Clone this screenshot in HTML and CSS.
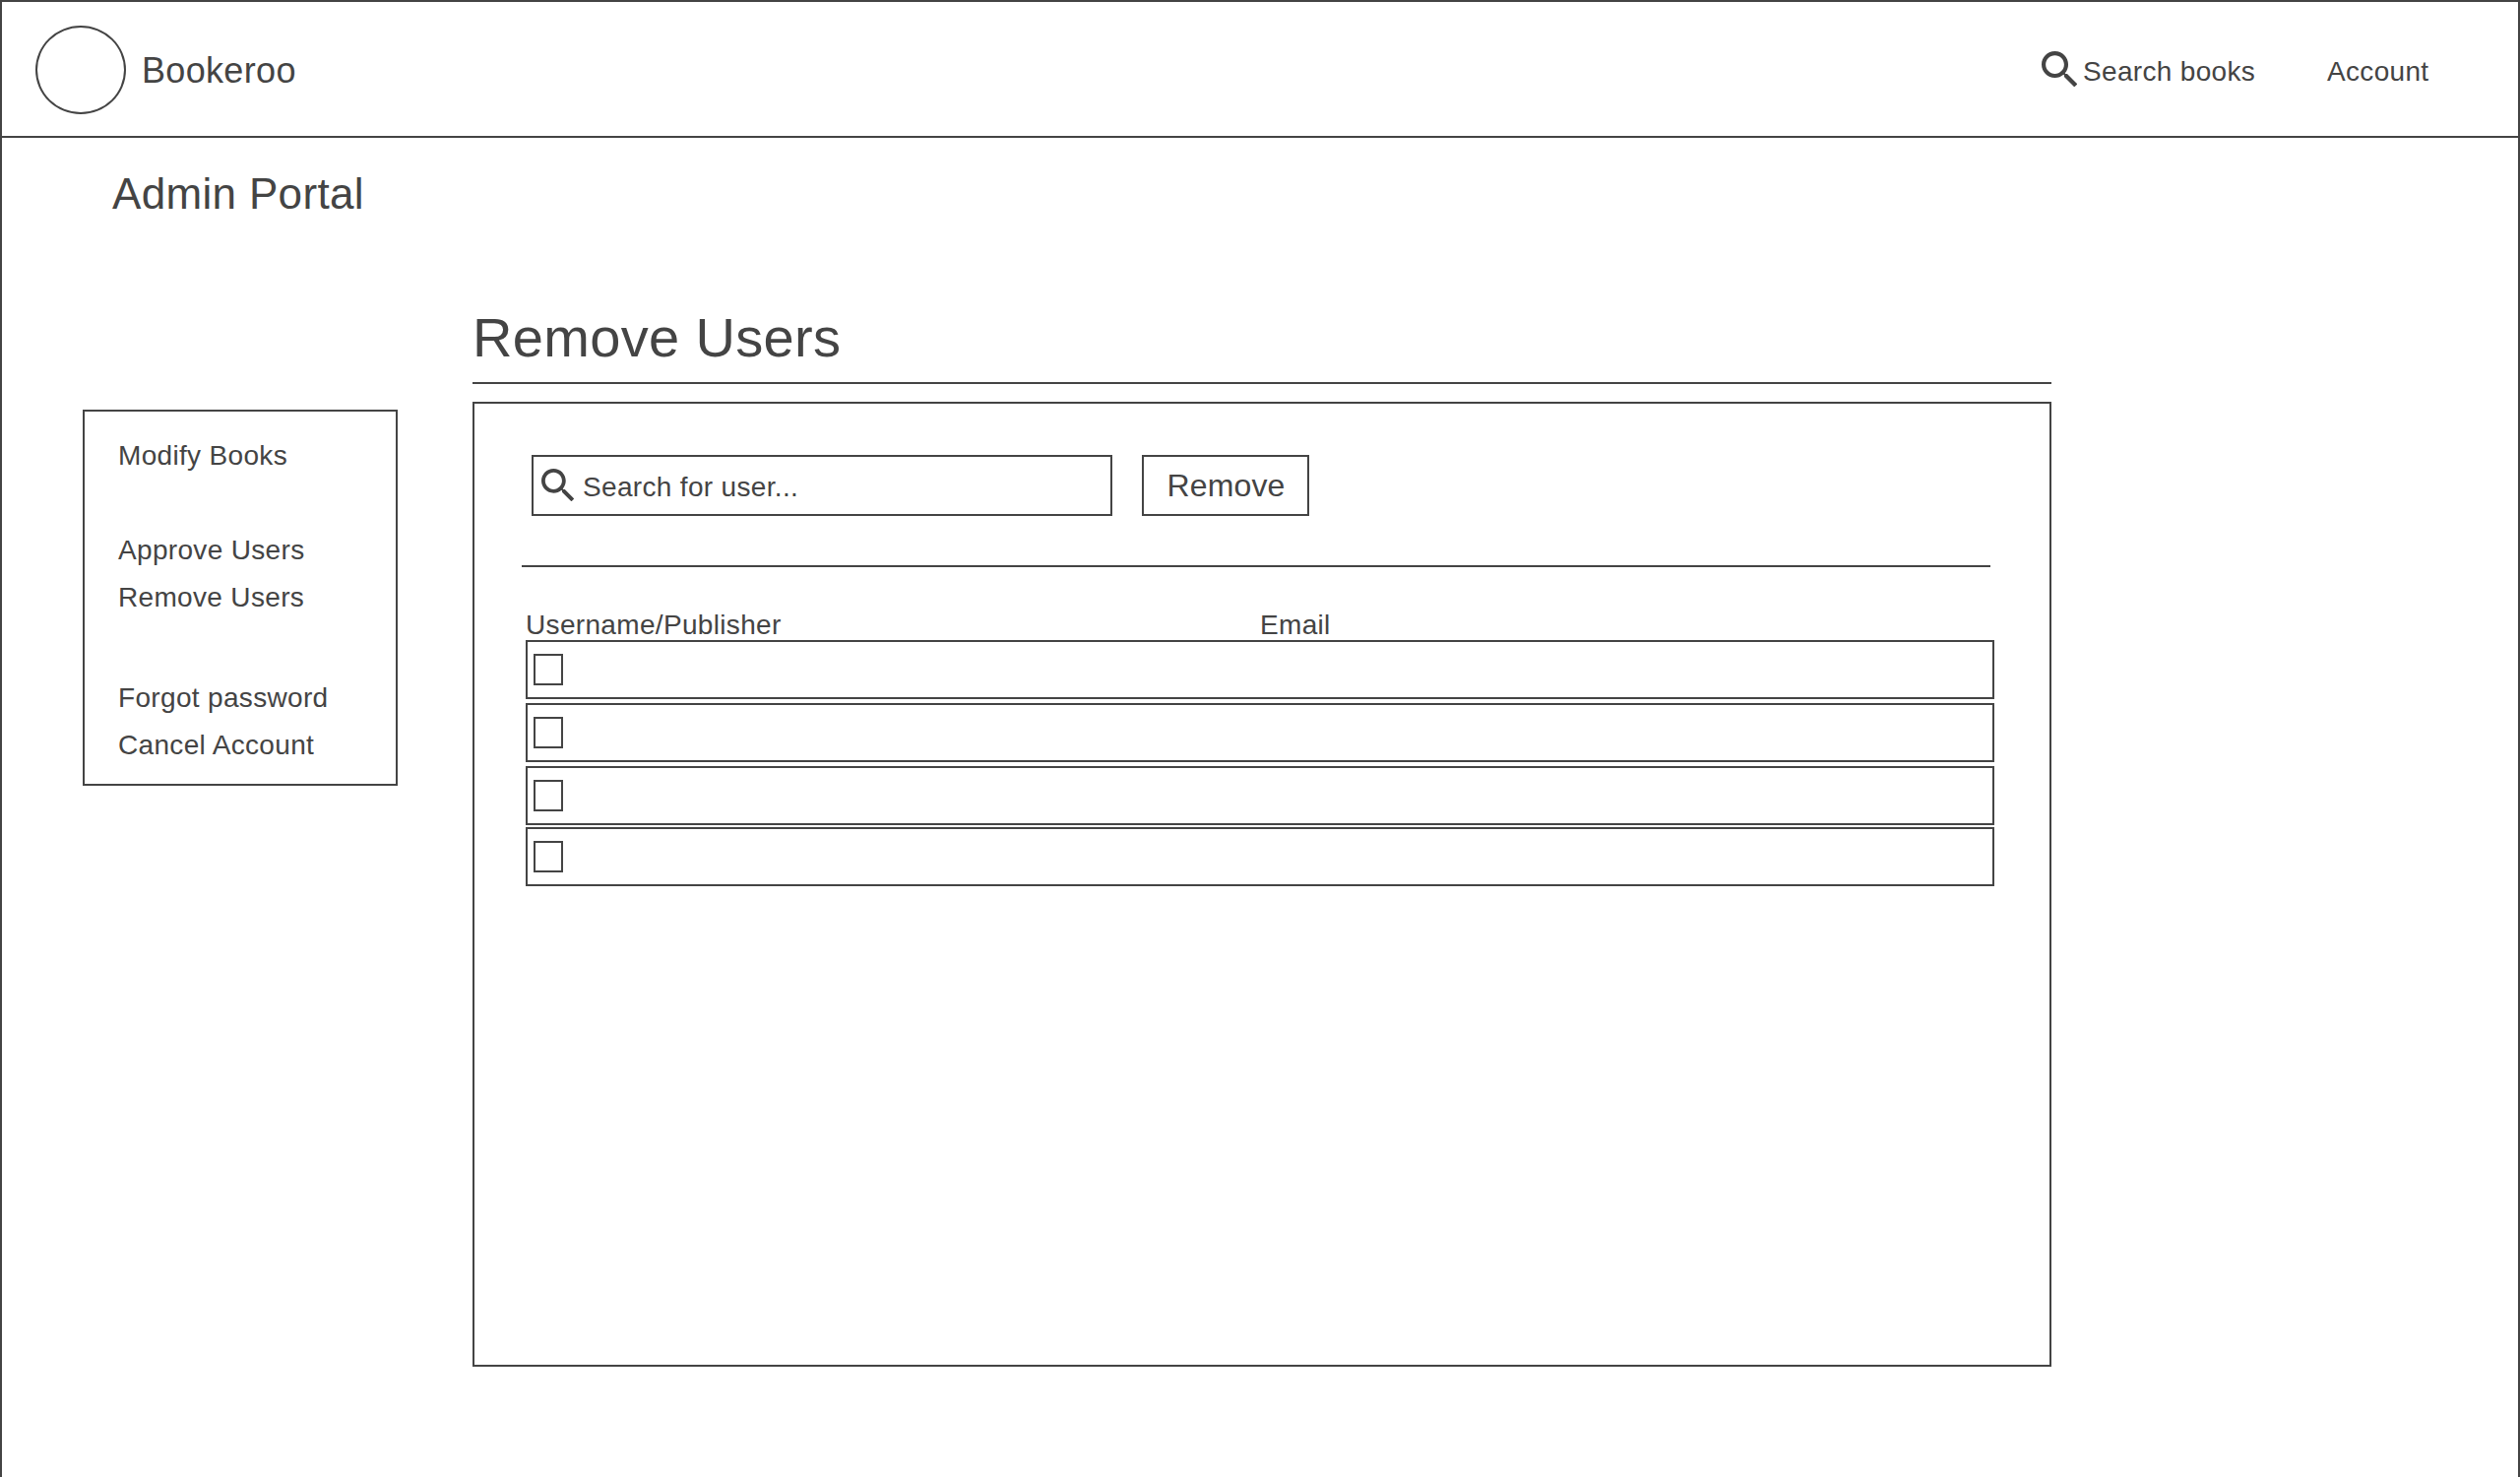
FILE: index.html
```html
<!DOCTYPE html>
<html lang="en">
<head>
  <meta charset="utf-8">
  <title>Bookeroo – Admin Portal</title>
  <link rel="stylesheet" href="styles.css">
</head>
<body>
  <svg class="sprite" aria-hidden="true">
    <symbol id="search" viewBox="3 3 17.49 17.49">
      <path d="M15.5 14h-.79l-.28-.27C15.41 12.59 16 11.11 16 9.5 16 5.91 13.09 3 9.5 3S3 5.91 3 9.5 5.91 16 9.5 16c1.61 0 3.09-.59 4.23-1.57l.27.28v.79l5 4.99L20.49 19l-4.99-5zm-6 0C7.01 14 5 11.99 5 9.5S7.01 5 9.5 5 14 7.01 14 9.5 11.99 14 9.5 14z"/>
    </symbol>
  </svg>
  <div class="page">
    <header class="topbar">
      <div class="logo"></div>
      <div class="brand">Bookeroo</div>
      <nav class="topnav">
        <a class="topnav-search"><svg class="icon icon-lg"><use href="#search"/></svg><span>Search books</span></a>
        <a class="topnav-account"><span>Account</span></a>
      </nav>
    </header>

    <h1 class="portal-title">Admin Portal</h1>

    <div class="content">
      <aside class="sidebar">
        <ul class="menu">
          <li>Modify Books</li>
        </ul>
        <ul class="menu">
          <li>Approve Users</li>
          <li>Remove Users</li>
        </ul>
        <ul class="menu menu-account">
          <li>Forgot password</li>
          <li>Cancel Account</li>
        </ul>
      </aside>

      <main class="main">
        <h2 class="title">Remove Users</h2>
        <section class="panel">
          <div class="toolbar">
            <div class="search-field"><svg class="icon"><use href="#search"/></svg><span>Search for user...</span></div>
            <button class="remove-button" type="button">Remove</button>
          </div>
          <div class="divider"></div>
          <div class="table">
            <div class="table-head"><span>Username/Publisher</span><span>Email</span></div>
            <div class="row"><span class="checkbox"></span></div>
            <div class="row"><span class="checkbox"></span></div>
            <div class="row"><span class="checkbox"></span></div>
            <div class="row row-last"><span class="checkbox"></span></div>
          </div>
        </section>
      </main>
    </div>
  </div>
</body>
</html>
```

FILE: styles.css
```css
* {
  box-sizing: border-box;
}

body {
  margin: 0;
  background: #fff;
  color: #444;
  font: 28px/32px "Liberation Sans", Arial, sans-serif;
  letter-spacing: 0.33px;
}

.sprite {
  display: none;
}

.page {
  height: 1500px;
  overflow: hidden;
  border: 2px solid #444;
  border-bottom: 0;
}

.topbar {
  display: flex;
  align-items: center;
  height: 138px;
  padding: 0 90px 0 34px;
  border-bottom: 2px solid #444;
}

.logo {
  width: 92px;
  height: 90px;
  margin-top: 2px;
  border: 2px solid #444;
  border-radius: 50%;
}

.brand {
  margin-left: 16px;
  padding-top: 4px;
  font-size: 36px;
  line-height: 40px;
}

.topnav {
  display: flex;
  align-items: center;
  margin-left: auto;
  padding-top: 4px;
}

.topnav-search {
  display: flex;
  align-items: center;
  width: 290px;
}

.topnav-account {
  width: 104px;
}

.topnav span {
  display: block;
  padding-top: 2px;
}

.icon {
  width: 33.3px;
  height: 33.3px;
  margin-top: -1px;
  fill: #444;
}

.icon-lg {
  width: 36.4px;
  height: 36.4px;
  margin: -4px 5.6px 0 0;
}

.portal-title {
  margin: 32px 0 0 112px;
  font-size: 44px;
  font-weight: 400;
  line-height: 50px;
}

.content {
  display: flex;
  align-items: flex-start;
  gap: 76px;
  margin-top: 89px;
  padding-left: 82px;
}

.sidebar {
  width: 320px;
  height: 382px;
  margin-top: 105px;
  padding: 21px 34px;
  border: 2px solid #444;
}

.menu {
  margin: 0 0 48px;
  padding: 0;
  list-style: none;
  line-height: 48px;
}

.menu-account {
  margin-top: 54px;
}

.main {
  width: 1604px;
}

.title {
  margin: 0;
  height: 79px;
  border-bottom: 2px solid #444;
  font-size: 56px;
  font-weight: 400;
  line-height: 64px;
}

.panel {
  height: 980px;
  margin-top: 18px;
  padding: 52px 56px 0 48px;
  border: 2px solid #444;
}

.toolbar {
  display: flex;
  gap: 30px;
  margin-left: 10px;
}

.search-field {
  display: flex;
  align-items: center;
  gap: 9px;
  width: 590px;
  height: 62px;
  padding-left: 7.7px;
  border: 2px solid #444;
}

.search-field span {
  padding-top: 3px;
}

.remove-button {
  width: 170px;
  height: 62px;
  padding: 0 0 0 1px;
  border: 2px solid #444;
  background: none;
  color: inherit;
  font: 32px/36px "Liberation Sans", Arial, sans-serif;
  letter-spacing: 0.15px;
}

.divider {
  width: 1492px;
  height: 2px;
  margin-top: 50px;
  background: #444;
}

.table {
  display: flex;
  flex-direction: column;
  gap: 4px;
  width: 1492px;
  margin: 43px 0 0 4px;
}

.table-head {
  display: grid;
  grid-template-columns: 1fr 1fr;
  height: 27px;
}

.row {
  display: flex;
  align-items: center;
  height: 60px;
  padding-left: 6px;
  border: 2px solid #444;
}

.row-last {
  margin-top: -2px;
}

.checkbox {
  width: 30px;
  height: 32px;
  border: 2px solid #444;
}
```
